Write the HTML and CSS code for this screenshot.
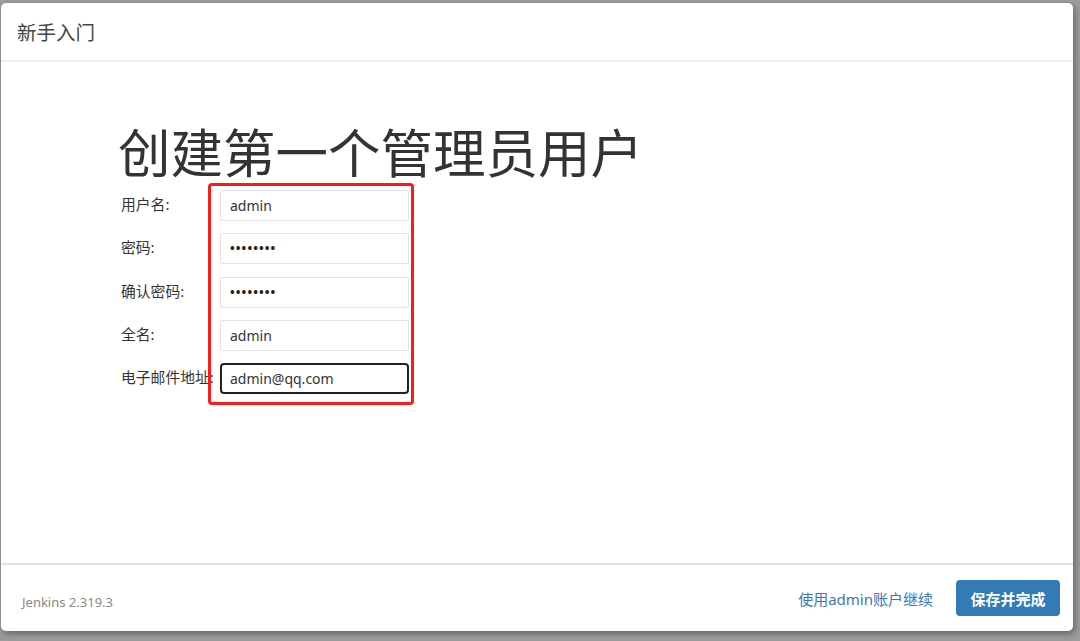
FILE: index.html
```html
<!DOCTYPE html>
<html lang="zh-CN">
<head>
<meta charset="utf-8">
<title>新手入门</title>
<link rel="stylesheet" href="styles.css">
</head>
<body>
<div class="modal">
  <div class="modal-header">新手入门</div>
  <div class="modal-body">
    <h1 class="title">创建第一个管理员用户</h1>
    <div class="form">
      <div class="row"><label class="label">用户名:</label><div class="input">admin</div></div>
      <div class="row"><label class="label">密码:</label><div class="input dots">••••••••</div></div>
      <div class="row"><label class="label">确认密码:</label><div class="input dots">••••••••</div></div>
      <div class="row"><label class="label">全名:</label><div class="input">admin</div></div>
      <div class="row"><label class="label">电子邮件地址:</label><div class="input focus">admin@qq.com</div></div>
      <div class="highlight"></div>
    </div>
  </div>
  <div class="modal-footer">
    <span class="version">Jenkins 2.319.3</span>
    <div class="actions">
      <a class="link">使用admin账户继续</a>
      <button class="btn">保存并完成</button>
    </div>
  </div>
</div>
</body>
</html>
```
FILE: styles.css
```css
html, body {
  margin: 0;
  padding: 0;
  height: 100%;
}
body {
  background: #9c9c9c;
  font-family: "Noto Sans", "Noto Sans CJK SC", sans-serif;
  color: #333;
  overflow: hidden;
}
.modal {
  margin: 3px 7px 0 1px;
  height: 628px;
  background: #fff;
  border-radius: 5px;
  box-shadow: 2px 3px 6px rgba(0,0,0,0.35);
  display: flex;
  flex-direction: column;
}
.modal-header {
  height: 59px;
  box-sizing: border-box;
  padding: 0 16px;
  display: flex;
  align-items: center;
  font-size: 19.5px;
  color: #444;
  border-bottom: 2px solid #eeeeee;
  flex: none;
}
.modal-body {
  flex: 1;
  padding: 0 0 0 115px;
}
.title {
  margin: 61px 0 0 2px;
  font-size: 52.5px;
  font-weight: 400;
  line-height: 60px;
  color: #333;
}
.form {
  position: relative;
  margin-top: 7px;
  display: flex;
  flex-direction: column;
  gap: 12.3px;
}
.row {
  display: flex;
  align-items: center;
}
.label {
  width: 99px;
  padding-left: 5px;
  font-size: 14.8px;
  color: #333;
  position: relative;
  top: -2px;
  white-space: nowrap;
  overflow: visible;
}
.input {
  width: 189px;
  height: 31px;
  box-sizing: border-box;
  border: 1px solid #e2e2e2;
  border-radius: 2px;
  padding: 0 9px;
  display: flex;
  align-items: center;
  font-size: 14px;
  color: #333;
  background: #fff;
  position: relative;
  z-index: 1;
}
.input.dots {
  font-size: 12.5px;
  letter-spacing: 1.1px;
  color: #222;
  font-weight: 700;
}
.input.focus {
  border: 2px solid #222;
  border-radius: 4px;
  padding: 0 8px;
}
.highlight {
  position: absolute;
  left: 92px;
  top: -7px;
  width: 206px;
  height: 222px;
  box-sizing: border-box;
  border: 3px solid #fb1b1b;
  border-radius: 4px;
  z-index: 2;
}
.modal-footer {
  flex: none;
  height: 68px;
  box-sizing: border-box;
  border-top: 2px solid #e3e3e3;
  padding: 0 13px 0 21px;
  display: flex;
  align-items: center;
  justify-content: space-between;
}
.version {
  font-size: 13px;
  color: #888;
  position: relative;
  top: 4px;
}
.actions {
  display: flex;
  align-items: center;
  gap: 23px;
}
.link {
  color: #3b78b8;
  font-size: 15px;
  cursor: pointer;
}
.btn {
  background: #337ab7;
  color: #fff;
  border: none;
  border-radius: 4px;
  font-family: inherit;
  font-size: 15px;
  font-weight: 600;
  width: 104px;
  height: 36px;
  padding: 0;
}
```
